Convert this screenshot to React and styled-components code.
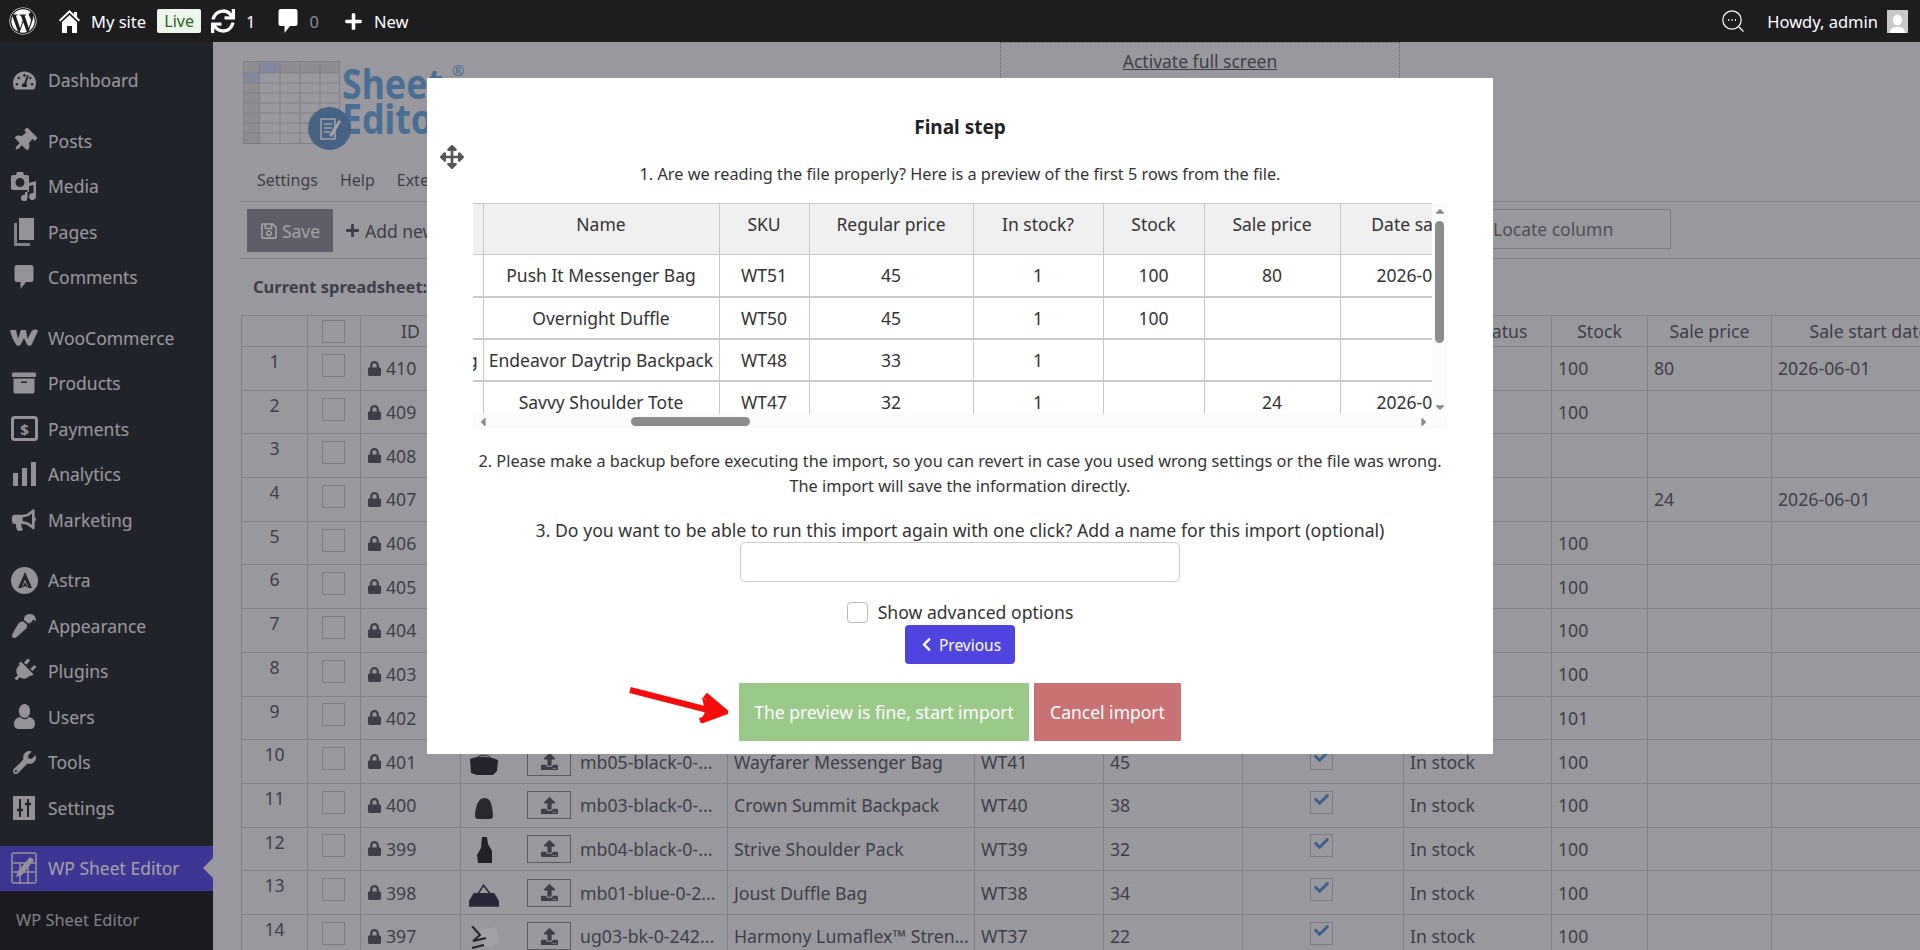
import styled, { createGlobalStyle } from 'styled-components';
import {
  FaWordpress, FaSync, FaPlus, FaTachometerAlt, FaThumbtack, FaArchive, FaBullhorn,
  FaPaintBrush, FaPlug, FaWrench, FaRegSave, FaLock, FaUpload, FaCheck, FaArrowsAlt,
  FaChevronLeft, FaCaretUp, FaCaretDown, FaCaretLeft, FaCaretRight,
} from 'react-icons/fa';

const GlobalStyle = createGlobalStyle`
  html, body { margin: 0; padding: 0; }
  body {
    width: 1920px;
    height: 950px;
    overflow: hidden;
    background: #f0f0f1;
    font-family: "Noto Sans", "Open Sans", sans-serif;
    color: #50525a;
  }
  * { box-sizing: border-box; }
`;

const Page = styled.div`
  position: relative;
  width: 1920px;
  height: 950px;
  overflow: hidden;
  display: flex;
  flex-direction: column;
`;

/* ---- top bar ---- */
const TopBar = styled.header`
  position: relative;
  z-index: 20;
  height: 42px;
  flex: none;
  background: #1d1d1f;
  color: #fff;
  display: flex;
  align-items: center;
  font-size: 16.5px;
`;
const TopItem = styled.div`
  display: flex;
  align-items: center;
  gap: ${(p) => p.$gap ?? 10}px;
  margin-left: ${(p) => p.$ml ?? 0}px;
  color: ${(p) => p.$dim ? '#8c8f94' : '#fff'};
`;
const LiveBadge = styled.span`
  width: 44px;
  height: 24px;
  margin-left: 11px;
  border-radius: 2px;
  background: #edf6ec;
  color: #2b5f22;
  font-size: 16px;
  line-height: 24px;
  text-align: center;
`;
const TopRight = styled.div`
  margin-left: auto;
  padding-right: 12px;
  display: flex;
  align-items: center;
`;
const Avatar = styled.div`
  width: 21px;
  height: 23px;
  margin-left: 9px;
  background: #c8c8c8;
  display: flex;
  align-items: flex-end;
  justify-content: center;
`;

/* ---- sidebar ---- */
const Body = styled.div`
  flex: 1;
  min-height: 0;
  display: flex;
`;
const Sidebar = styled.nav`
  width: 213px;
  flex: none;
  background: #1d2327;
  padding-top: 15.5px;
  display: flex;
  flex-direction: column;
  position: relative;
`;
const MenuItem = styled.div`
  height: ${(p) => p.$active ? 45 : 45.5}px;
  margin-bottom: ${(p) => p.$sep ? 15 : 0}px;
  display: flex;
  align-items: center;
  position: relative;
  flex: none;
  padding-left: 10px;
  font-size: 17.5px;
  color: ${(p) => p.$active ? '#fff' : '#ededee'};
  background: ${(p) => p.$active ? '#5044e0' : 'transparent'};
  ${(p) => p.$active && `
    &::after {
      content: "";
      position: absolute;
      right: 0;
      top: 50%;
      margin-top: -10px;
      border: 10px solid transparent;
      border-right-color: #f0f0f1;
      border-left-width: 0;
    }
  `}
`;
const MenuIcon = styled.span`
  width: 28px;
  margin-right: 10px;
  display: flex;
  align-items: center;
  justify-content: center;
  flex: none;
  color: #e4e5e6;
`;
const SubMenu = styled.div`
  flex: 1;
  background: #121315;
  padding: 17px 0 0 16px;
  font-size: 16.4px;
  color: #c3c4c7;
`;

/* ---- main ---- */
const Main = styled.main`
  flex: 1;
  min-width: 0;
  padding-left: 27px;
  display: flex;
  flex-direction: column;
  overflow: hidden;
`;
const HeadRow = styled.div`
  height: 124px;
  flex: none;
  display: flex;
`;
const Logo = styled.div`
  width: 240px;
  margin: 19px 0 0 3px;
  position: relative;
  color: #62a6de;
  font-weight: 700;
  font-size: 41px;
  line-height: 35px;
  flex: none;
`;
const LogoWords = styled.div`
  position: absolute;
  left: 99px;
  top: 5px;
  transform: scaleX(.87);
  transform-origin: left top;
`;
const LogoBadge = styled.div`
  position: absolute;
  left: 65px;
  top: 46px;
  width: 43px;
  height: 43px;
  border-radius: 50%;
  background: #5e92c4;
  display: flex;
  align-items: center;
  justify-content: center;
`;
const LogoMark = styled.span`
  position: absolute;
  left: 209px;
  top: -1px;
  font-size: 15px;
  line-height: 20px;
  font-weight: 400;
`;
const FullScreen = styled.div`
  width: 400px;
  height: 60px;
  margin-left: 517px;
  border: 1px dotted #999;
  text-align: center;
  padding-top: 6px;
  a { color: #50525a; font-size: 17.5px; text-decoration: underline; }
`;
const MenuRow = styled.div`
  height: 36px;
  flex: none;
  display: flex;
  align-items: flex-start;
  padding: 3px 0 0 17px;
  border-bottom: 1px solid #c6c6ca;
  font-size: 16px;
  span { margin-right: 22px; }
`;
const Toolbar = styled.div`
  height: 57px;
  flex: none;
  display: flex;
  padding: 7px 0 0 7px;
  border-bottom: 1px solid #c6c6ca;
`;
const SaveButton = styled.div`
  width: 86px;
  height: 43px;
  background: #898890;
  color: #fff;
  display: flex;
  align-items: center;
  justify-content: center;
  gap: 4px;
  font-size: 17.5px;
`;
const AddNew = styled.div`
  margin-left: 12px;
  height: 43px;
  display: flex;
  align-items: center;
  gap: 5px;
  font-size: 17.5px;
`;
const LocateBox = styled.div`
  margin-left: auto;
  margin-right: 249px;
  width: 190px;
  height: 40px;
  border: 1px solid #b9b9bd;
  padding-left: 11px;
  font-size: 17.5px;
  line-height: 38px;
  color: #6c6e75;
`;
const CurrentSheet = styled.div`
  height: 56px;
  flex: none;
  padding: 15px 0 0 13px;
  font-size: 16.5px;
  font-weight: 700;
  line-height: 26px;
`;
const Sheet = styled.table`
  margin-left: 1px;
  border-collapse: collapse;
  table-layout: fixed;
  width: 1725px;
  flex: none;
  font-size: 17.7px;
  th, td {
    border: 1px solid #c6c6ca;
    padding: 0 6px;
    white-space: nowrap;
    overflow: hidden;
    font-weight: 400;
  }
  th { height: 31px; text-align: center; }
  td { height: 43.7px; }
`;
const RowNum = styled.td`
  && { vertical-align: top; text-align: center; padding-top: 2px; }
`;
const TickBox = styled.span`
  width: 23px;
  height: 23px;
  margin: ${(p) => p.$head ? '0 0 0 8px' : '-6px 0 0 8px'};
  margin-left: ${(p) => p.$far ? 61 : 8}px;
  border: 1px solid #bcbcc1;
  display: flex;
  align-items: center;
  justify-content: center;
  color: #4d8bd1;
  svg { margin-top: -5px; }
`;
const IdCell = styled.div`
  display: flex;
  align-items: center;
  gap: 4px;
`;
const ImageCell = styled.div`
  display: flex;
  align-items: center;
  margin-left: 2px;
`;
const ThumbSlot = styled.div`
  width: 30px;
  height: 28px;
  display: flex;
  align-items: flex-end;
  justify-content: center;
  flex: none;
`;
const UploadBtn = styled.div`
  width: 44px;
  height: 28px;
  margin: 0 9px 0 28px;
  border: 1px solid #85858b;
  color: #50525a;
  display: flex;
  align-items: center;
  justify-content: center;
  flex: none;
`;

/* ---- modal ---- */
const Overlay = styled.div`
  position: absolute;
  inset: 42px 0 0 0;
  z-index: 10;
  background: rgba(40, 38, 48, .43);
  display: flex;
  justify-content: center;
  align-items: flex-start;
`;
const Modal = styled.section`
  position: relative;
  width: 1066px;
  height: 676px;
  margin-top: 36px;
  padding: 36px 46px 0;
  background: #fff;
  color: #333;
  text-align: center;
  display: flex;
  flex-direction: column;
  align-items: center;
`;
const MoveHandle = styled.div`
  position: absolute;
  left: 13px;
  top: 67px;
  color: #555;
  line-height: 0;
`;
const Title = styled.h2`
  margin: 0;
  font-size: 19px;
  line-height: 26px;
  font-weight: 700;
  color: #222;
`;
const Line = styled.p`
  margin: ${(p) => p.$mt}px 0 0;
  font-size: ${(p) => p.$size ?? 16.3}px;
  line-height: ${(p) => p.$lh ?? 24}px;
  white-space: nowrap;
`;
const Preview = styled.div`
  margin-top: 17px;
  width: 974px;
  height: 226px;
  flex: none;
  display: grid;
  grid-template-columns: 959px 15px;
  grid-template-rows: 211px 15px;
`;
const PreviewView = styled.div`
  overflow: hidden;
`;
const PreviewTable = styled.table`
  border-collapse: collapse;
  table-layout: fixed;
  width: 1031px;
  font-size: 17.5px;
  color: #333;
  th, td {
    border-left: 1px solid #c9c9c9;
    padding: 0;
    white-space: nowrap;
    overflow: hidden;
    font-weight: 400;
  }
  th {
    height: 51px;
    background: #f0f0f0;
    border-top: 1px solid #c9c9c9;
    border-bottom: 1px solid #c9c9c9;
    vertical-align: top;
    padding-top: 8px;
  }
  td {
    height: 42px;
    border-bottom: 2px solid #c9c9c9;
  }
  th:first-child, td:first-child { border-left: 0; }
`;
const ClippedCell = styled.td`
  && { text-align: left; }
  span { margin-left: -6px; display: inline-block; }
`;
const VBar = styled.div`
  background: #fbfbfb;
  display: flex;
  flex-direction: column;
  align-items: center;
  color: #8a8a8a;
  line-height: 0;
  padding-top: 1px;
`;
const VThumb = styled.div`
  width: 9px;
  height: 122px;
  margin: 3px 0 auto;
  border-radius: 5px;
  background: #8c8c8c;
`;
const HBar = styled.div`
  background: #fbfbfb;
  grid-column: 1 / span 2;
  display: flex;
  align-items: center;
  color: #8a8a8a;
  padding: 0 16px 0 3px;
  line-height: 0;
`;
const HThumb = styled.div`
  width: 119px;
  height: 9px;
  margin: 0 auto 0 141px;
  border-radius: 5px;
  background: #8c8c8c;
`;
const NameInput = styled.input`
  width: 440px;
  height: 40px;
  flex: none;
  margin-top: -1px;
  border: 1px solid #ccc;
  border-radius: 5px;
  background: #fff;
`;
const AdvancedRow = styled.label`
  margin-top: 19px;
  height: 22px;
  display: flex;
  align-items: center;
  gap: 10px;
  font-size: 17.6px;
`;
const FakeCheck = styled.span`
  width: 21px;
  height: 21px;
  border: 1px solid #bbb;
  border-radius: 4px;
  background: #fff;
`;
const PrevButton = styled.button`
  width: 110px;
  height: 39px;
  margin-top: 2px;
  flex: none;
  border: 0;
  border-radius: 4px;
  background: #5044e0;
  color: #fff;
  font: inherit;
  font-size: 15.5px;
  display: flex;
  align-items: center;
  justify-content: center;
  gap: 5px;
`;
const ActionRow = styled.div`
  position: relative;
  margin-top: 19px;
  display: flex;
  gap: 5px;
`;
const ActionButton = styled.button`
  height: 58px;
  width: ${(p) => p.$w}px;
  border: 0;
  background: ${(p) => p.$bg};
  color: #fff;
  font: inherit;
  font-size: 17.5px;
`;
const RedArrow = styled.svg`
  position: absolute;
  right: calc(100% + 11px);
  top: 4px;
`;

const Bubble = ({ w = 20, h = 26, color = 'currentColor' }) => (
  <svg width={w} height={h} viewBox="0 0 20 26" fill={color}>
    <path d="M3 1h14a2.5 2.5 0 0 1 2.5 2.5v12A2.5 2.5 0 0 1 17 18h-5l-5.5 7v-7H3a2.5 2.5 0 0 1-2.500-2.500v-12A2.500 2.500 0 0 1 3 1z" />
  </svg>
);

const HomeIcon = () => (
  <svg width="21" height="23" viewBox="0 0 21 23" fill="currentColor">
    <path d="M10.500 0L15 4.200V2h3v5l3 3-1.300 1.400-9.200-8.600-9.200 8.600L0 10z" />
    <path d="M10.500 5L18 12v11h-5v-7H8v7H3V12z" />
  </svg>
);
const UserIcon = () => (
  <svg width="21" height="25" viewBox="0 0 21 25" fill="currentColor">
    <ellipse cx="10.500" cy="7" rx="5.700" ry="7" />
    <path d="M6 13c3 3 6 3 9 0 4 1 6 3 6 7 0 3-2 5-5 5H5c-3 0-5-2-5-5 0-4 2-6 6-7z" />
  </svg>
);
const MediaIcon = () => (
  <svg width="26" height="30" viewBox="0 0 26 30" fill="currentColor">
    <path fillRule="evenodd" d="M2 4h3l1-3h6l1 3h3a2 2 0 0 1 2 2v11a2 2 0 0 1-2 2H2a2 2 0 0 1-2-2V6a2 2 0 0 1 2-2zm7 3a4.500 4.500 0 1 0 0 9 4.500 4.500 0 0 0 0-9z" />
    <path d="M25 10v15.500a3.500 3.500 0 1 1-2.500-3.300V14l-6 1.200V27a3.300 3.300 0 1 1-2.500-3.200V21h4v-9z" />
  </svg>
);
const PagesIcon = () => (
  <svg width="20" height="28" viewBox="0 0 20 28" fill="currentColor">
    <path d="M5 0h15v22H5z" />
    <path d="M0 5h3v20h13v3H0z" opacity=".85" />
  </svg>
);
const WooIcon = () => (
  <svg width="28" height="18" viewBox="0 0 28 18" fill="currentColor">
    <path d="M0 1h6l2 9 3-9h5l1.500 9L21 3c1-2 3-2.500 5-2.500 1.500 0 2 1 1.500 2.500L22 15c-1 2-3.500 2.500-5 .5L14 9l-3 6c-1 2-3.500 2.500-5 .5C3 11 1 6 0 1z" />
  </svg>
);
const PaymentsIcon = () => (
  <svg width="27" height="25" viewBox="0 0 27 25" fill="none" stroke="currentColor" strokeWidth="3">
    <rect x="1.500" y="1.500" width="24" height="22" rx="2" />
    <text x="13.500" y="18.500" fontSize="15" fontWeight="700" textAnchor="middle" fill="currentColor" stroke="none" fontFamily="Noto Sans">$</text>
  </svg>
);
const BarsIcon = () => (
  <svg width="23" height="24" viewBox="0 0 23 24" fill="currentColor">
    <path d="M0 11h5v13H0zM9 6h5v18H9zM18 0h5v24h-5z" />
  </svg>
);
const AstraIcon = () => (
  <svg width="27" height="27" viewBox="0 0 27 27">
    <circle cx="13.500" cy="13.500" r="13.500" fill="currentColor" />
    <path d="M14 5L7 21h3.500L14 12.500 17.500 21H21z M11 21l3-2 3 2-3-6z" fill="#1d2327" />
  </svg>
);
const SlidersIcon = () => (
  <svg width="22" height="24" viewBox="0 0 22 24">
    <rect width="22" height="24" rx="1" fill="currentColor" />
    <path d="M7 3v18M15 3v18" stroke="#1d2327" strokeWidth="2" />
    <path d="M4 14h6M12 8h6" stroke="#1d2327" strokeWidth="2.500" />
  </svg>
);
const SheetEditorIcon = () => (
  <svg width="26" height="32" viewBox="0 0 26 32" fill="none" stroke="#e4e5e6" strokeWidth="1.500">
    <rect x="1" y="1" width="24" height="30" rx="2" />
    <path d="M1 11h24M1 20h24M9 11v20M17 11v20" />
    <path d="M5 25l2-6L19 5l4 3L11 23z" fill="#e4e5e6" stroke="none" />
  </svg>
);
const ChatSearch = () => (
  <svg width="22" height="22" viewBox="0 0 22 22" fill="none" stroke="#fff" strokeWidth="1.200">
    <circle cx="10" cy="10" r="9.200" />
    <path d="M17 17l4.500 4.500" />
    <path d="M6.200 10h1M9.600 10h1M13 10h1" strokeWidth="1.800" />
  </svg>
);
const LogoGrid = () => (
  <svg width="97" height="83" viewBox="0 0 97 83" style={{ display: 'block' }}>
    <rect x=".5" y=".5" width="96" height="82" fill="#f0f0f1" stroke="#c4c4c8" />
    <rect x="1" y="1" width="95" height="11" fill="#dcdcdc" />
    <rect x="1" y="1" width="16" height="81" fill="#dcdcdc" />
    <rect x="17" y="1" width="20" height="11" fill="#cdd3f5" />
    <rect x="1" y="12" width="16" height="10" fill="#cdd3f5" />
    <path d="M16.500 1v81M37 1v81M57 1v81M77 1v81M1 12h95M1 22h95M1 32h95M1 42h95M1 52h95M1 62h95M1 72h95" stroke="#c4c4c8" fill="none" />
  </svg>
);
const Thumb = ({ kind }) => {
  if (kind === 'messenger') return (
    <svg width="30" height="22" viewBox="0 0 30 22" fill="#24242a"><path d="M1 5c8-3 18-3 28 1l-1 11-4 4H8l-6-2z" /><path d="M7 5C9 0 20 0 23 5" fill="none" stroke="#24242a" /></svg>
  );
  if (kind === 'backpack') return (
    <svg width="20" height="22" viewBox="0 0 20 22" fill="#2c2c31"><path d="M5 4c2-4 9-4 11 0 2 4 3 11 3 16l-2 2H3l-2-2c0-6 1-12 4-16z" /></svg>
  );
  if (kind === 'shoulder') return (
    <svg width="17" height="26" viewBox="0 0 17 26" fill="#202024"><path d="M6 0h5l1 7 4 7v12H2l-1-8 4-7z" /></svg>
  );
  if (kind === 'duffle') return (
    <svg width="31" height="23" viewBox="0 0 31 23"><path d="M9 10L15 1l7 9" fill="none" stroke="#24242c" strokeWidth="1.500" /><path d="M5 9h21l5 8v6H0v-6z" fill="#2a2a3e" /></svg>
  );
  return (
    <svg width="29" height="24" viewBox="0 0 29 24"><path d="M10 4l16-3 3 15-13 6-5-6z" fill="#fff" /><path d="M2 0l8 9-7 6 13-3M2 22l12-3" stroke="#222" strokeWidth="2" fill="none" /></svg>
  );
};

const topMenu = [
  { label: 'Dashboard', icon: <FaTachometerAlt size={23} />, sep: true },
  { label: 'Posts', icon: <FaThumbtack size={24} style={{ transform: 'rotate(45deg)' }} /> },
  { label: 'Media', icon: <MediaIcon /> },
  { label: 'Pages', icon: <PagesIcon /> },
  { label: 'Comments', icon: <Bubble />, sep: true },
  { label: 'WooCommerce', icon: <WooIcon /> },
  { label: 'Products', icon: <FaArchive size={24} /> },
  { label: 'Payments', icon: <PaymentsIcon /> },
  { label: 'Analytics', icon: <BarsIcon /> },
  { label: 'Marketing', icon: <FaBullhorn size={24} />, sep: true },
  { label: 'Astra', icon: <AstraIcon /> },
  { label: 'Appearance', icon: <FaPaintBrush size={24} style={{ transform: 'rotate(180deg)' }} /> },
  { label: 'Plugins', icon: <FaPlug size={24} style={{ transform: 'rotate(45deg)' }} /> },
  { label: 'Users', icon: <UserIcon /> },
  { label: 'Tools', icon: <FaWrench size={23} /> },
  { label: 'Settings', icon: <SlidersIcon />, sep: true },
];

const sheetCols = [66, 53, 100, 267, 247, 129, 139, 161, 148, 96, 124, 195];
const sheetRows = [
  { n: 1, id: 410, stock: '100', sale: '80', date: '2026-06-01' },
  { n: 2, id: 409, stock: '100' },
  { n: 3, id: 408 },
  { n: 4, id: 407, sale: '24', date: '2026-06-01' },
  { n: 5, id: 406, stock: '100' },
  { n: 6, id: 405, stock: '100' },
  { n: 7, id: 404, stock: '100' },
  { n: 8, id: 403, stock: '100' },
  { n: 9, id: 402, stock: '101' },
  { n: 10, id: 401, thumb: 'messenger', file: 'mb05-black-0-...', name: 'Wayfarer Messenger Bag', sku: 'WT41', price: '45', stock: '100' },
  { n: 11, id: 400, thumb: 'backpack', file: 'mb03-black-0-...', name: 'Crown Summit Backpack', sku: 'WT40', price: '38', stock: '100' },
  { n: 12, id: 399, thumb: 'shoulder', file: 'mb04-black-0-...', name: 'Strive Shoulder Pack', sku: 'WT39', price: '32', stock: '100' },
  { n: 13, id: 398, thumb: 'duffle', file: 'mb01-blue-0-2...', name: 'Joust Duffle Bag', sku: 'WT38', price: '34', stock: '100' },
  { n: 14, id: 397, thumb: 'strap', file: 'ug03-bk-0-242...', name: 'Harmony Lumaflex™ Stren...', sku: 'WT37', price: '22', stock: '100' },
];

const previewCols = [10, 236, 90, 164, 130, 101, 136, 164];
const previewHead = ['', 'Name', 'SKU', 'Regular price', 'In stock?', 'Stock', 'Sale price', 'Date sale on'];
const previewRows = [
  ['', 'Push It Messenger Bag', 'WT51', '45', '1', '100', '80', '2026-06-01'],
  ['', 'Overnight Duffle', 'WT50', '45', '1', '100', '', ''],
  ['g', 'Endeavor Daytrip Backpack', 'WT48', '33', '1', '', '', ''],
  ['', 'Savvy Shoulder Tote', 'WT47', '32', '1', '', '24', '2026-06-01'],
];

function SpreadsheetTable() {
  return (
    <Sheet>
      <colgroup>
        {sheetCols.map((w, i) => <col key={i} style={{ width: w }} />)}
      </colgroup>
      <thead>
        <tr>
          <th />
          <th><TickBox $head /></th>
          <th>ID</th>
          <th />
          <th />
          <th />
          <th />
          <th />
          <th>Stock status</th>
          <th>Stock</th>
          <th>Sale price</th>
          <th>Sale start date</th>
        </tr>
      </thead>
      <tbody>
        {sheetRows.map((r) => (
          <tr key={r.id}>
            <RowNum>{r.n}</RowNum>
            <td><TickBox /></td>
            <td><IdCell><FaLock size={15} />{r.id}</IdCell></td>
            <td>
              {r.thumb && (
                <ImageCell>
                  <ThumbSlot><Thumb kind={r.thumb} /></ThumbSlot>
                  <UploadBtn><FaUpload size={17} /></UploadBtn>
                  {r.file}
                </ImageCell>
              )}
            </td>
            <td>{r.name}</td>
            <td>{r.sku}</td>
            <td>{r.price}</td>
            <td>{r.thumb && <TickBox $far><FaCheck size={15} /></TickBox>}</td>
            <td>{r.thumb && 'In stock'}</td>
            <td>{r.stock}</td>
            <td>{r.sale}</td>
            <td>{r.date}</td>
          </tr>
        ))}
      </tbody>
    </Sheet>
  );
}

function ImportModal() {
  return (
    <Modal>
      <MoveHandle><FaArrowsAlt size={24} /></MoveHandle>
      <Title>Final step</Title>
      <Line $mt={22}>1. Are we reading the file properly? Here is a preview of the first 5 rows from the file.</Line>
      <Preview>
        <PreviewView>
          <PreviewTable>
            <colgroup>
              {previewCols.map((w, i) => <col key={i} style={{ width: w }} />)}
            </colgroup>
            <thead>
              <tr>{previewHead.map((h, i) => <th key={i}>{h}</th>)}</tr>
            </thead>
            <tbody>
              {previewRows.map((row) => (
                <tr key={row[1]}>
                  {row.map((c, i) => (
                    i === 0
                      ? <ClippedCell key={i}><span>{c}</span></ClippedCell>
                      : <td key={i}>{c}</td>
                  ))}
                </tr>
              ))}
            </tbody>
          </PreviewTable>
        </PreviewView>
        <VBar>
          <FaCaretUp size={14} />
          <VThumb />
          <FaCaretDown size={14} />
        </VBar>
        <HBar>
          <FaCaretLeft size={14} />
          <HThumb />
          <FaCaretRight size={14} />
        </HBar>
      </Preview>
      <Line $mt={20} $lh={25}>
        2. Please make a backup before executing the import, so you can revert in case you used wrong settings or the file was wrong.
        <br />
        The import will save the information directly.
      </Line>
      <Line $mt={19} $size={17.66} $lh={25}>3. Do you want to be able to run this import again with one click? Add a name for this import (optional)</Line>
      <NameInput />
      <AdvancedRow><FakeCheck />Show advanced options</AdvancedRow>
      <PrevButton><FaChevronLeft size={15} />Previous</PrevButton>
      <ActionRow>
        <RedArrow width="100" height="36" viewBox="0 0 100 36">
          <path d="M2 3l82 21M77 8l20 17-25 9" stroke="#f60c0c" strokeWidth="6" fill="none" />
          <path d="M98 26L72 35l5-10-3-15z" fill="#f60c0c" />
        </RedArrow>
        <ActionButton $w={290} $bg="#9aca8a">The preview is fine, start import</ActionButton>
        <ActionButton $w={147} $bg="#c97274">Cancel import</ActionButton>
      </ActionRow>
    </Modal>
  );
}

export default function App() {
  return (
    <Page>
      <GlobalStyle />
      <TopBar>
        <TopItem $ml={9}><FaWordpress size={28} /></TopItem>
        <TopItem $ml={22} $gap={11}><HomeIcon />My site</TopItem>
        <LiveBadge>Live</LiveBadge>
        <TopItem $ml={10} $gap={11}><FaSync size={24} />1</TopItem>
        <TopItem $ml={22} $gap={12} $dim><span style={{ color: '#fff', display: 'flex' }}><Bubble /></span>0</TopItem>
        <TopItem $ml={25} $gap={11}><FaPlus size={19} />New</TopItem>
        <TopRight>
          <ChatSearch />
          <TopItem $ml={23}>Howdy, admin</TopItem>
          <Avatar>
            <svg width="15" height="19" viewBox="0 0 15 19" fill="#fff"><ellipse cx="7.500" cy="6" rx="4.500" ry="5.500" /><path d="M0 19c0-5 3-6 7.500-6s7.500 1 7.500 6z" /></svg>
          </Avatar>
        </TopRight>
      </TopBar>
      <Body>
        <Sidebar>
          {topMenu.map((m) => (
            <MenuItem key={m.label} $sep={m.sep}>
              <MenuIcon>{m.icon}</MenuIcon>
              {m.label}
            </MenuItem>
          ))}
          <MenuItem $active>
            <MenuIcon><SheetEditorIcon /></MenuIcon>
            WP Sheet Editor
          </MenuItem>
          <SubMenu>WP Sheet Editor</SubMenu>
        </Sidebar>
        <Main>
          <HeadRow>
            <Logo>
              <LogoGrid />
              <LogoWords>Sheet<br />Editor</LogoWords>
              <LogoMark>®</LogoMark>
              <LogoBadge>
                <svg width="24" height="26" viewBox="0 0 24 26" fill="none" stroke="#fff" strokeWidth="1.500">
                  <path d="M3 3h14v20H3zM6 8h8M6 12h8M6 16h6" />
                  <path d="M11 19L21 4l2 1.500L14 21z" fill="#fff" stroke="none" />
                </svg>
              </LogoBadge>
            </Logo>
            <FullScreen><a href="#full">Activate full screen</a></FullScreen>
          </HeadRow>
          <MenuRow>
            <span>Settings</span>
            <span>Help</span>
            <span>Extensions</span>
          </MenuRow>
          <Toolbar>
            <SaveButton><FaRegSave size={18} />Save</SaveButton>
            <AddNew><FaPlus size={15} />Add new</AddNew>
            <LocateBox>Locate column</LocateBox>
          </Toolbar>
          <CurrentSheet>Current spreadsheet:</CurrentSheet>
          <SpreadsheetTable />
        </Main>
      </Body>
      <Overlay>
        <ImportModal />
      </Overlay>
    </Page>
  );
}
